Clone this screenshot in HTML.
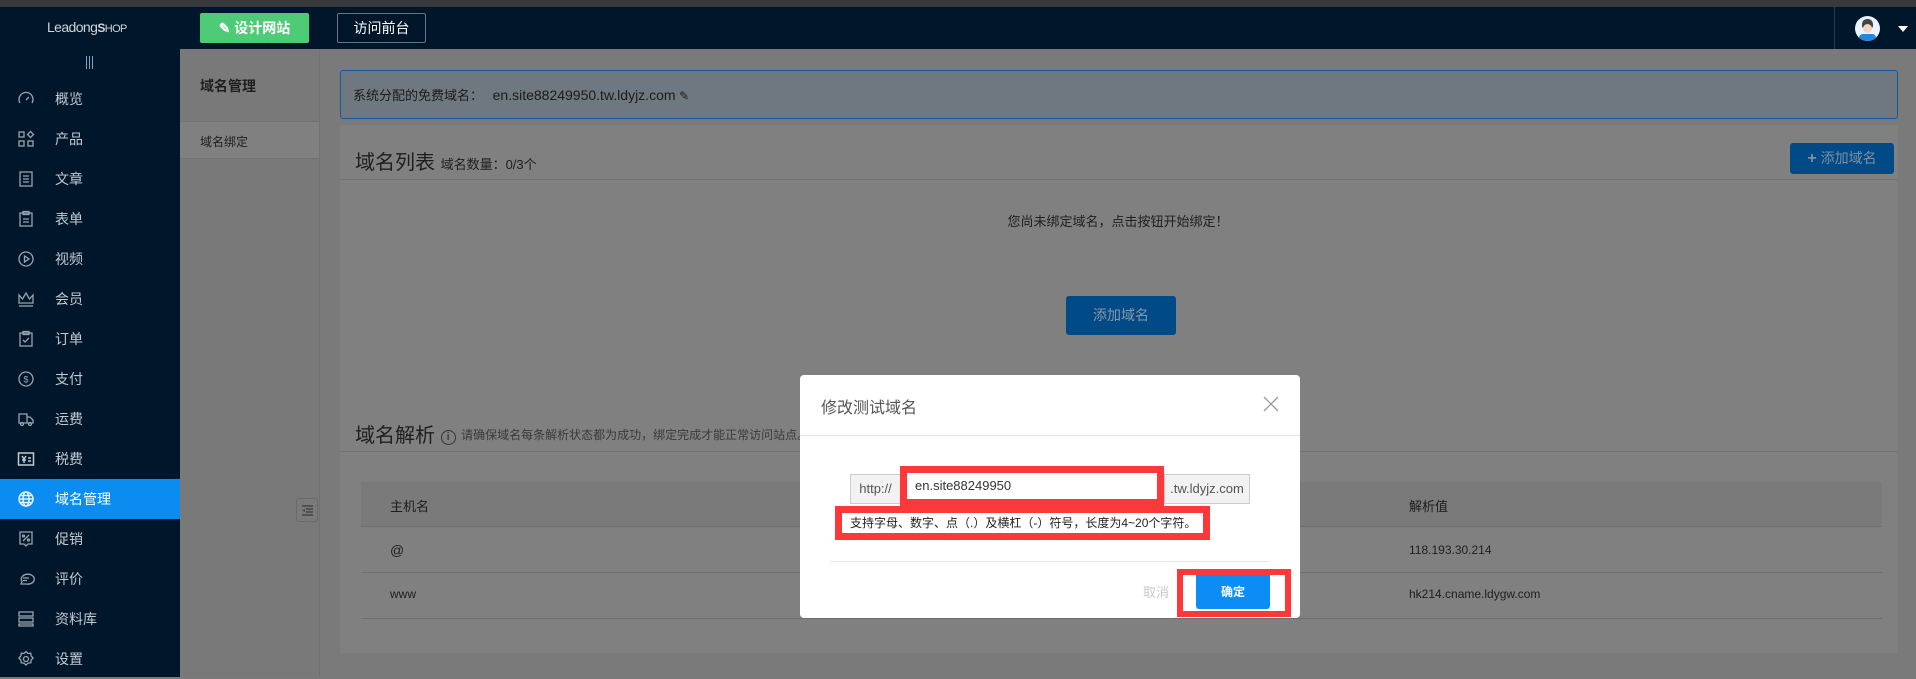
<!DOCTYPE html>
<html><head><meta charset="utf-8"><style>
*{box-sizing:border-box;margin:0;padding:0}
body{width:1916px;height:677px;overflow:hidden;position:relative;background:#7a7a7b;font-family:"Liberation Sans","Noto Sans CJK SC",sans-serif;}
.a{position:absolute}
.side{left:0;top:49px;width:180px;height:628px;background:#00162b}
.mi{position:absolute;left:0;width:180px;height:40px;color:#c3cad2;font-size:14px;line-height:40px}
.mi span{position:absolute;left:55px}
.mi svg{position:absolute;left:17px;top:11px}
.mi.act{background:#0a8cf0;color:#fff}
</style></head><body>
<div class="a" style="left:0;top:0;width:1916px;height:7px;background:#38393d"></div>
<div class="a" style="left:0;top:7px;width:1916px;height:42px;background:#00162b"></div>
<div class="a" style="left:47px;top:19px;color:#d0d4d8;font-size:14px;letter-spacing:-0.6px">Leadong<b style="font-size:12px">S</b><span style="font-size:11px">HOP</span></div>
<div class="a" style="left:200px;top:13px;width:109px;height:30px;background:#4dcb76;border-radius:2px;color:#fff;font-size:14px;line-height:30px;text-align:center;font-weight:bold">✎ 设计网站</div>
<div class="a" style="left:337px;top:13px;width:89px;height:30px;border:1px solid #6b7480;border-radius:2px;color:#fff;font-size:14px;line-height:28px;text-align:center">访问前台</div>
<div class="a" style="left:1834px;top:7px;width:1px;height:42px;background:#2a3a4c"></div>
<div class="a" style="left:1855px;top:16px;width:25px;height:25px;border-radius:50%;background:#e8f4ff;overflow:hidden"><div class="a" style="left:7px;top:3px;width:11px;height:9px;border-radius:5px 5px 2px 2px;background:#444"></div><div class="a" style="left:8px;top:8px;width:9px;height:9px;border-radius:50%;background:#f6d5c0"></div><div class="a" style="left:4px;top:18px;width:17px;height:8px;background:#1e88e5;border-radius:4px 4px 0 0"></div></div>
<div class="a" style="left:1898px;top:26px;width:0;height:0;border-left:5px solid transparent;border-right:5px solid transparent;border-top:6px solid #fff"></div>

<div class="a side">
<div class="a" style="left:86px;top:7px;width:7px;height:13px;border-left:1px solid #7ea3c6;border-right:1px solid #7ea3c6"><div style="margin-left:2px;width:1px;height:13px;background:#7ea3c6"></div></div>
</div>
<div class="a" style="left:0;top:0">
<div class="mi" style="top:79px"><svg width="18" height="18" viewBox="0 0 18 18" fill="none" stroke="#9aa4ae" stroke-width="1.3"><path d="M3 13A7 7 0 1 1 15 13"/><path d="M9 10l3-3"/></svg><span>概览</span></div>
<div class="mi" style="top:119px"><svg width="18" height="18" viewBox="0 0 18 18" fill="none" stroke="#9aa4ae" stroke-width="1.3"><rect x="2" y="2" width="5" height="5"/><rect x="2" y="11" width="5" height="5"/><rect x="11" y="11" width="5" height="5"/><path d="M13.5 1.5l3 3-3 3-3-3z"/></svg><span>产品</span></div>
<div class="mi" style="top:159px"><svg width="18" height="18" viewBox="0 0 18 18" fill="none" stroke="#9aa4ae" stroke-width="1.3"><rect x="3" y="2" width="12" height="14"/><path d="M6 6h6M6 9h6M6 12h6"/></svg><span>文章</span></div>
<div class="mi" style="top:199px"><svg width="18" height="18" viewBox="0 0 18 18" fill="none" stroke="#9aa4ae" stroke-width="1.3"><rect x="3" y="3" width="12" height="13"/><rect x="6" y="1.5" width="6" height="3"/><path d="M6 9h6M6 12h6"/></svg><span>表单</span></div>
<div class="mi" style="top:239px"><svg width="18" height="18" viewBox="0 0 18 18" fill="none" stroke="#9aa4ae" stroke-width="1.3"><circle cx="9" cy="9" r="7"/><path d="M7.5 6v6l4.5-3z"/></svg><span>视频</span></div>
<div class="mi" style="top:279px"><svg width="18" height="18" viewBox="0 0 18 18" fill="none" stroke="#9aa4ae" stroke-width="1.3"><path d="M2 5l3.5 4L9 3l3.5 6L16 5v8H2z"/><path d="M2 16h14"/></svg><span>会员</span></div>
<div class="mi" style="top:319px"><svg width="18" height="18" viewBox="0 0 18 18" fill="none" stroke="#9aa4ae" stroke-width="1.3"><rect x="3" y="3" width="12" height="13"/><rect x="6" y="1.5" width="6" height="3"/><path d="M6 10l2 2 4-4"/></svg><span>订单</span></div>
<div class="mi" style="top:359px"><svg width="18" height="18" viewBox="0 0 18 18" fill="none" stroke="#9aa4ae" stroke-width="1.3"><circle cx="9" cy="9" r="7"/><text x="9" y="12.5" font-size="9" fill="#9aa4ae" stroke="none" text-anchor="middle">$</text></svg><span>支付</span></div>
<div class="mi" style="top:399px"><svg width="18" height="18" viewBox="0 0 18 18" fill="none" stroke="#9aa4ae" stroke-width="1.3"><path d="M2 4h8v9H2zM10 7h3l3 3v3h-6"/><circle cx="5" cy="14" r="1.5"/><circle cx="13" cy="14" r="1.5"/></svg><span>运费</span></div>
<div class="mi" style="top:439px"><svg width="18" height="18" viewBox="0 0 18 18" fill="none" stroke="#c3cad2" stroke-width="1.5"><rect x="1.5" y="3" width="15" height="12"/><path d="M5 6l2 3 2-3M7 9v4M5 10h4M11 8h3M11 11h3"/></svg><span>税费</span></div>
<div class="mi act" style="top:479px"><svg width="18" height="18" viewBox="0 0 18 18" fill="none" stroke="#e6f2fc" stroke-width="1.5"><circle cx="9" cy="9" r="7"/><ellipse cx="9" cy="9" rx="3" ry="7"/><path d="M2 9h14M3 5.5h12M3 12.5h12"/></svg><span>域名管理</span></div>
<div class="mi" style="top:519px"><svg width="18" height="18" viewBox="0 0 18 18" fill="none" stroke="#9aa4ae" stroke-width="1.3"><path d="M3 2h12v12h-4l-2 2-2-2H3z"/><path d="M6 11l6-6"/><circle cx="6.5" cy="6" r="1"/><circle cx="11.5" cy="10" r="1"/></svg><span>促销</span></div>
<div class="mi" style="top:559px"><svg width="18" height="18" viewBox="0 0 18 18" fill="none" stroke="#9aa4ae" stroke-width="1.3"><path d="M4 14l1-2.5A6.5 5 0 1 1 9 14z"/><path d="M6 8h6M6 10.5h4"/></svg><span>评价</span></div>
<div class="mi" style="top:599px"><svg width="18" height="18" viewBox="0 0 18 18" fill="none" stroke="#9aa4ae" stroke-width="1.3"><rect x="2" y="2" width="14" height="4"/><rect x="2" y="8" width="14" height="4"/><path d="M2 14h14v2H2z"/></svg><span>资料库</span></div>
<div class="mi" style="top:639px"><svg width="18" height="18" viewBox="0 0 18 18" fill="none" stroke="#9aa4ae" stroke-width="1.3"><circle cx="9" cy="9" r="2.5"/><path d="M9 1.5l2 2 2.8-.3.3 2.8 2 2-2 2-.3 2.8-2.8.3-2 2-2-2-2.8-.3-.3-2.8-2-2 2-2 .3-2.8 2.8.3z"/></svg><span>设置</span></div>
</div>

<!-- submenu -->
<div class="a" style="left:180px;top:49px;width:140px;height:628px;background:#797979;border-right:1px solid #717171"></div>
<div class="a" style="left:200px;top:76px;font-size:14px;font-weight:bold;color:#1f1f1f">域名管理</div>
<div class="a" style="left:180px;top:121px;width:139px;height:38px;background:#808080;border-top:1px solid #727272;border-bottom:1px solid #727272"></div>
<div class="a" style="left:200px;top:133px;font-size:12px;color:#1f1f1f">域名绑定</div>
<div class="a" style="left:296px;top:498px;width:22px;height:24px;border:1px solid #6a6a6a;border-radius:3px;background:#7a7a7a"><svg width="20" height="22" viewBox="0 0 20 22"><path d="M5 7h11M9 10h7M9 13h7M5 16h11" stroke="#444" stroke-width="1.5"/><path d="M8 10v3l-3-1.5z" fill="#444"/></svg></div>

<!-- content -->
<div class="a" style="left:340px;top:70px;width:1558px;height:49px;background:#6f7780;border:1px solid #1358a0;border-radius:3px"></div>
<div class="a" style="left:353px;top:85px;font-size:13px;color:#1c1c1c">系统分配的免费域名： <span style="font-size:14px;margin-left:6px">en.site88249950.tw.ldyjz.com</span> <span style="font-size:12px">✎</span></div>

<div class="a" style="left:340px;top:125px;width:1558px;height:528px;background:#808080"></div>
<div class="a" style="left:355px;top:146px;font-size:20px;color:#1e1e1e">域名列表 <span style="font-size:13px">域名数量：0/3个</span></div>
<div class="a" style="left:340px;top:179px;width:1558px;height:1px;background:#747474"></div>
<div class="a" style="left:1790px;top:143px;width:104px;height:31px;background:#004a87;border-radius:3px;color:#7f8fa0;font-size:14px;line-height:31px;text-align:center"><b style="font-size:16px">+</b> 添加域名</div>
<div class="a" style="left:940px;top:211px;width:356px;text-align:center;font-size:13px;color:#1e1e1e">您尚未绑定域名，点击按钮开始绑定！</div>
<div class="a" style="left:1066px;top:296px;width:110px;height:39px;background:#004a87;border-radius:3px;color:#8b98a6;font-size:14px;line-height:39px;text-align:center">添加域名</div>

<div class="a" style="left:355px;top:419px;font-size:20px;color:#1e1e1e">域名解析 <span style="display:inline-block;width:15px;height:15px;border:1px solid #333;border-radius:50%;font-size:11px;line-height:13px;text-align:center;vertical-align:2px">i</span> <span style="font-size:12px;color:#3a3a3a;vertical-align:3px">请确保域名每条解析状态都为成功，绑定完成才能正常访问站点。</span></div>
<div class="a" style="left:340px;top:451px;width:1558px;height:1px;background:#747474"></div>
<div class="a" style="left:361px;top:482px;width:1521px;height:45px;background:#7a7a7a;border-bottom:1px solid #6e6e6e"></div>
<div class="a" style="left:390px;top:496px;font-size:13px;color:#1e1e1e">主机名</div>
<div class="a" style="left:1409px;top:496px;font-size:13px;color:#1e1e1e">解析值</div>
<div class="a" style="left:390px;top:542px;font-size:14px;color:#1e1e1e">@</div>
<div class="a" style="left:1409px;top:543px;font-size:12px;color:#1e1e1e">118.193.30.214</div>
<div class="a" style="left:361px;top:572px;width:1521px;height:1px;background:#6e6e6e"></div>
<div class="a" style="left:390px;top:587px;font-size:12px;color:#1e1e1e">www</div>
<div class="a" style="left:1409px;top:587px;font-size:12px;color:#1e1e1e">hk214.cname.ldygw.com</div>
<div class="a" style="left:361px;top:618px;width:1521px;height:1px;background:#6e6e6e"></div>

<!-- modal -->
<div class="a" style="left:800px;top:375px;width:500px;height:243px;background:#fff;border-radius:4px"></div>
<div class="a" style="left:821px;top:394px;font-size:16px;color:#555">修改测试域名</div>
<svg class="a" style="left:1263px;top:396px" width="16" height="16" viewBox="0 0 16 16"><path d="M1 1l14 14M15 1L1 15" stroke="#999" stroke-width="1.3"/></svg>
<div class="a" style="left:800px;top:435px;width:500px;height:1px;background:#e3e3e3"></div>
<div class="a" style="left:850px;top:474px;width:51px;height:30px;background:#f2f2f2;border:1px solid #ccc;font-size:13px;color:#555;line-height:28px;text-align:center">http://</div>
<div class="a" style="left:1164px;top:474px;width:86px;height:30px;background:#f2f2f2;border:1px solid #ccc;font-size:13px;color:#555;line-height:28px;text-align:center">.tw.ldyjz.com</div>
<div class="a" style="left:900px;top:466px;width:264px;height:40px;border:7px solid #fd3838;background:#fff;font-size:13px;color:#333;line-height:26px;padding-left:8px">en.site88249950</div>
<div class="a" style="left:835px;top:506px;width:375px;height:34px;border:7px solid #fd3838;background:#fff;font-size:12px;color:#222;line-height:20px;padding-left:8px;white-space:nowrap">支持字母、数字、点（.）及横杠（-）符号，长度为4~20个字符。</div>
<div class="a" style="left:830px;top:561px;width:440px;height:1px;background:#e6e6e6"></div>
<div class="a" style="left:1143px;top:582px;font-size:13px;color:#c8c8c8">取消</div>
<div class="a" style="left:1177px;top:569px;width:114px;height:48px;border:6px solid #fd3838;background:#fff"></div>
<div class="a" style="left:1196px;top:575px;width:74px;height:34px;background:#0b8df5;border-radius:0 0 3px 3px;color:#fff;font-size:12px;font-weight:bold;line-height:34px;text-align:center">确定</div>
</body></html>
